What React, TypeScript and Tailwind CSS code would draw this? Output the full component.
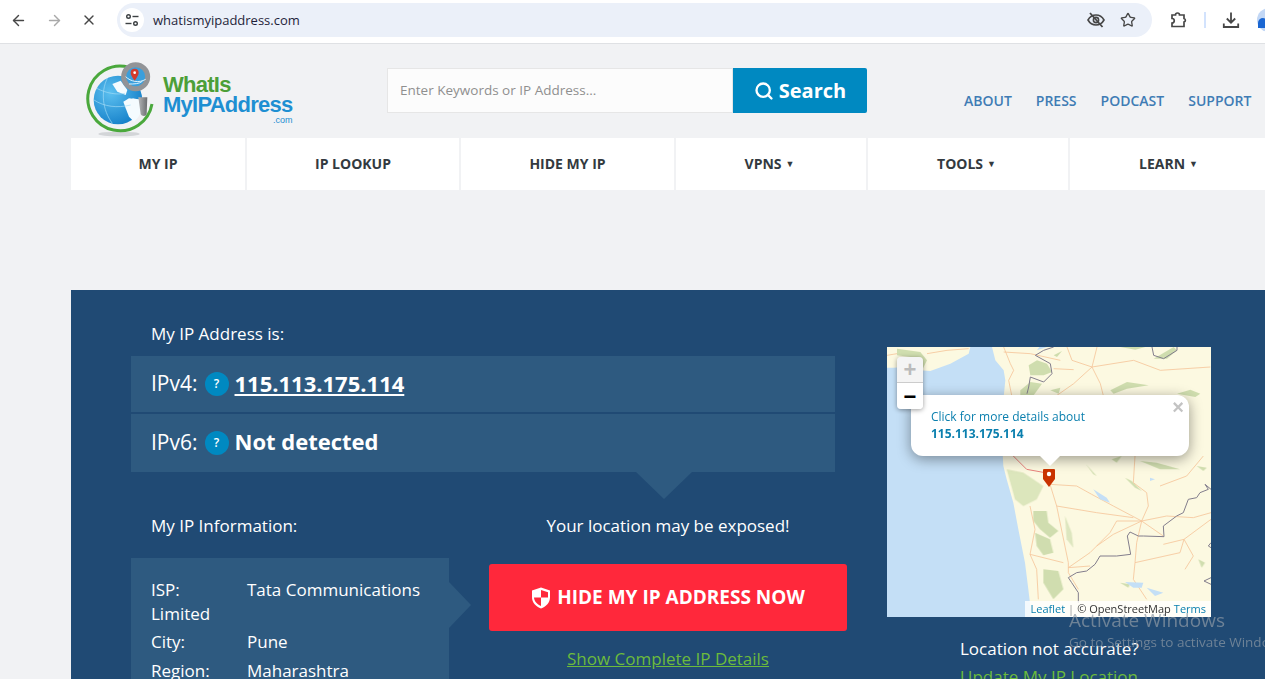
import { ArrowLeft, ArrowRight, X, Star, Search } from "lucide-react";

const navItems = [
  { label: "MY IP", width: "w-[174px]" },
  { label: "IP LOOKUP", width: "w-[212px]" },
  { label: "HIDE MY IP", width: "w-[213px]" },
  { label: "VPNS", width: "w-[190px] pr-[3px]", caret: true },
  { label: "TOOLS", width: "w-[200px] pr-[3px]", caret: true },
  { label: "LEARN", width: "w-[199px] pr-[2px]", caret: true },
];

function BrowserBar() {
  return (
    <div className="flex h-[44px] items-center border-b border-[#dfe1e4] bg-white pb-[3px] text-[#474747]">
      <ArrowLeft size={17} strokeWidth={2} className="ml-[10px] shrink-0" />
      <ArrowRight size={17} strokeWidth={2} className="ml-[19px] shrink-0 text-[#a9a9a9]" />
      <X size={16} strokeWidth={2} className="ml-[18px] shrink-0" />
      <div className="ml-[20px] flex h-[34px] w-[1035px] shrink-0 items-center rounded-full bg-[#ebf0f9] pl-[3px]">
        <div className="flex h-[24px] w-[24px] items-center justify-center rounded-full bg-white">
          <svg width="16" height="16" viewBox="0 0 16 16" fill="none" stroke="#3c4043" strokeWidth="1.4">
            <circle cx="4.5" cy="4.5" r="1.8" />
            <path d="M8.5 4.5h6" />
            <circle cx="11.5" cy="11.5" r="1.8" />
            <path d="M1.5 11.5h6" />
          </svg>
        </div>
        <span className="ml-[9px] pt-[1px] text-[13px] text-[#1f1f3a]">whatismyipaddress.com</span>
        <div className="ml-auto flex items-center gap-[15px] pr-[16px]">
          <svg width="18" height="18" viewBox="0 0 18 18" fill="none" stroke="#474747" strokeWidth="1.6">
            <path d="M1 9c2-3.6 4.800-5 8-5s6 1.400 8 5c-2 3.600-4.800 5-8 5s-6-1.400-8-5z" />
            <circle cx="9" cy="9" r="2.600" />
            <path d="M3 2l12.500 14" strokeWidth="1.800" />
          </svg>
          <Star size={16} strokeWidth={2} />
        </div>
      </div>
      <svg className="ml-[17px] shrink-0" width="18" height="18" viewBox="0 0 18 18" fill="none" stroke="#474747" strokeWidth="1.700">
        <path d="M3 4h3.500a2 2 0 0 1 4 0H15v3.500a1.800 1.800 0 0 1 0 3.500v4.500H3v-3.500a2 2 0 0 0 0-4.500z" />
      </svg>
      <div className="ml-[17px] h-[16px] w-[2px] shrink-0 bg-[#d3e3fd]" />
      <svg className="ml-[16px] shrink-0" width="18" height="18" viewBox="0 0 18 18" fill="none" stroke="#474747" strokeWidth="1.800">
        <path d="M9 1.500v10M4.800 7.500L9 11.700l4.200-4.200M1.800 12.500v3.500h14.400v-3.500" />
      </svg>
      <div className="ml-[17px] h-[24px] w-[24px] shrink-0 rounded-full bg-[#c2d7f5]">
        <div className="ml-[1px] mt-[10px] h-[10px] w-[10px] rounded-t-full bg-[#1a66d2]" />
      </div>
    </div>
  );
}

function Logo() {
  return (
    <div className="flex items-start">
      <svg width="76" height="78" viewBox="0 0 76 78">
        <defs>
          <radialGradient id="globe" cx="0.35" cy="0.35" r="0.8">
            <stop offset="0" stopColor="#5cc0f0" />
            <stop offset="1" stopColor="#0c78c4" />
          </radialGradient>
          <linearGradient id="handle" x1="0" y1="0" x2="1" y2="0">
            <stop offset="0" stopColor="#b4b6b8" />
            <stop offset="1" stopColor="#6b6d70" />
          </linearGradient>
        </defs>
        {/* coordinates below are from a 3x crop of the logo */}
        <g transform="translate(-2 -1) scale(0.3333)">
          <ellipse cx="105" cy="222" rx="62" ry="7" fill="#d3d5d8" />
          <path d="M135 22A97 97 0 1 0 204 132" fill="none" stroke="#4aa83c" strokeWidth="9" />
          <circle cx="102" cy="120" r="73" fill="url(#globe)" />
          <path d="M118 125l17-10 37 5 3 30-25 35-15-15-10-25z" fill="#f4fbfe" />
          <path d="M85 72l25-10 20 28-5 15-25-10z" fill="#f4fbfe" />
          <path d="M150 185A73 73 0 0 0 175 120L145 115 160 160z" fill="#f4fbfe" />
          <path d="M30 120c30 20 70 25 110 15M70 55c-20 40-15 95 15 135M38 85c30 15 60 20 85 15" fill="none" stroke="#a5dcf6" strokeWidth="2" />
          <circle cx="155" cy="50" r="36" fill="#3b9fdc" stroke="#929497" strokeWidth="15" />
          <path d="M125 50c15 15 40 20 60 8M135 72c15 0 30 0 40-8" fill="none" stroke="#dff2fb" strokeWidth="3" />
          <path d="M152 62c-8-12-12-17-12-24a12 12 0 0 1 24 0c0 7-4 12-12 24z" fill="#d43b2c" />
          <circle cx="152" cy="38" r="4" fill="white" />
          <path d="M163 112h27l-2 50c0 8-16 8-18 0z" fill="url(#handle)" />
        </g>
      </svg>
      <div className="ml-[1px] mt-[14px] flex flex-col font-['Liberation_Sans',sans-serif] font-bold">
        <span className="h-[20px] text-[22px] leading-[20px] tracking-[-0.75px] text-[#4c9f38]">WhatIs</span>
        <span className="h-[20px] text-[22px] leading-[20px] tracking-[-0.75px] text-[#1e8fd2]">MyIPAddress</span>
        <span className="self-end text-[9px] font-normal leading-[10px] text-[#1e8fd2]">.com</span>
      </div>
    </div>
  );
}

function Header() {
  return (
    <div className="flex h-[94px] pl-[15px]">
      <div className="mt-[17px] w-[301px]">
        <Logo />
      </div>
      <div className="mt-[24px] flex h-[45px]">
        <div className="flex w-[346px] items-center border border-[#e6e6e6] bg-[#fcfcfc] pl-[12px] text-[13.500px] text-[#8f8f8f]">
          Enter Keywords or IP Address...
        </div>
        <div className="flex w-[134px] items-center justify-center gap-[5px] rounded-r-[2px] bg-[#0089c1] text-[20px] font-bold text-white">
          <Search size={20} strokeWidth={2.800} />
          Search
        </div>
      </div>
      <div className="ml-[97px] mt-[46px] flex gap-[24px] text-[14px] font-semibold text-[#3f7cb4]">
        <span>ABOUT</span>
        <span>PRESS</span>
        <span>PODCAST</span>
        <span>SUPPORT</span>
      </div>
    </div>
  );
}

function Nav() {
  return (
    <div className="flex h-[52px] gap-[2px] overflow-hidden">
      {navItems.map((item) => (
        <div
          key={item.label}
          className={`flex shrink-0 items-center justify-center gap-[4px] bg-white pb-[2px] text-[14px] font-bold text-[#333a40] ${item.width}`}
        >
          {item.label}
          {item.caret && <span className="text-[9px] leading-none">▼</span>}
        </div>
      ))}
    </div>
  );
}

function Help() {
  return (
    <span className="ml-[7px] mr-[6px] flex h-[24px] w-[24px] items-center justify-center rounded-full bg-[#0089c1] text-[12px] font-semibold text-white">
      ?
    </span>
  );
}

function MapArt() {
  return (
    <svg width="324" height="270" viewBox="21 21 972 810">
      <path d="M336 21L346 61L371 91L376 121L371 171L368 340L370 378L380 418L400 488L415 568L435 668L445 748L455 831H993V21z" fill="#fcf9e1" />
      <path d="M21 21H271L266 41L211 71L151 93L110 90L71 81L41 83L21 83z" fill="#fcf9e1" />
      <path d="M471 31L501 21H478z" fill="#c4dff6" />

      {/* north part, offset of the top crop */}
      <g transform="translate(21 21)">
        <g fill="#c8d9a6" opacity="0.85">
          <path d="M30 5L100 15L120 40L105 70L70 30L30 25z" />
          <path d="M425 55L450 40L480 50L495 75L470 85L430 85z" />
          <path d="M400 130L430 105L465 110L440 145L400 145z" />
          <path d="M800 35L860 0L870 10L840 35z" />
          <path d="M700 0H775L745 8z" />
          <path d="M670 130L720 105L785 115L720 125L680 140z" />
          <path d="M870 140L910 128L940 140L925 150z" />
          <path d="M490 130L520 122L515 140z" />
          <path d="M500 25L525 12L510 30z" />
        </g>
        <g fill="none" stroke="#f5c59a" strokeWidth="2.500">
          <path d="M615 60L630 0" />
          <path d="M615 60L640 110L650 150" />
          <path d="M615 60L560 110L510 145" />
          <path d="M615 60L740 40L820 70L970 60" />
          <path d="M540 0L555 40L615 60" />
          <path d="M350 0L370 50L380 70L365 100L375 150" />
          <path d="M350 15L430 20L520 40" />
          <path d="M120 20L180 10L245 5" />
          <path d="M500 65L560 68" />
          <path d="M0 25L30 20" />
        </g>
        <path d="M500 0L470 10L445 25L490 50L495 80L470 105L430 90L425 120L420 140" fill="none" stroke="#827d8c" strokeWidth="3" />
        <path d="M795 0L800 25L830 35L870 10V0" fill="none" stroke="#827d8c" strokeWidth="3" />
      </g>

      {/* south part, offset of the lower crop */}
      <g transform="translate(360 348)">
        <g fill="#c8d9a6" opacity="0.85">
          <path d="M20 40L70 50L130 90L110 130L70 150L45 130z" opacity="0.75" />
          <path d="M100 165L140 165L145 200L175 225L150 245L120 220L100 195z" />
          <path d="M105 230L150 250L160 290L130 298L110 270z" />
          <path d="M130 340L175 345L190 400L160 430L130 380z" />
          <path d="M420 15L470 20L540 40L480 40z" />
          <path d="M375 65L395 75L425 105L405 95z" />
          <path d="M258 25L290 60L280 55z" />
          <path d="M195 180L215 230L220 275L200 250z" opacity="0.7" />
          <path d="M360 380L390 385L385 395z" />
          <path d="M595 310L615 320L605 335z" />
          <path d="M335 10L365 0L350 20z" />
          <path d="M590 30L620 35L610 45z" />
        </g>
        <g fill="none" stroke="#f5c59a" strokeWidth="2.500">
          <path d="M150 85L230 90L275 115L340 150L425 195" />
          <path d="M425 195L445 150L440 110L400 80L405 0" />
          <path d="M425 195L490 240" />
          <path d="M425 195L500 180L580 185L633 170" />
          <path d="M425 195L350 195L330 230L270 290L205 335" />
          <path d="M425 195L340 235L290 270" />
          <path d="M150 85L170 150L205 320L205 350L235 400" />
          <path d="M170 150L290 170L400 185" />
          <path d="M90 150L105 220L90 295L110 340L115 430" />
          <path d="M425 195L410 260L405 320L400 370L440 430" />
          <path d="M405 320L540 290L552 250L490 265" />
          <path d="M552 250L633 190" />
          <path d="M552 250L580 300L555 340" />
          <path d="M205 335L270 330" />
          <path d="M90 295L190 320" />
          <path d="M480 90L560 60L610 0" />
        </g>
        <path d="M40 0L80 40L135 50" fill="none" stroke="#e8817c" strokeWidth="3" />
        <g fill="#c4dff6">
          <path d="M280 100L320 125L330 140L300 130z" />
          <path d="M375 378L430 380L425 395L400 395z" />
          <path d="M440 395L490 410L465 420z" />
          <path d="M450 65L465 70L450 75z" />
        </g>
        <path
          d="M633 100L615 85L625 100L600 110L590 125L565 130L550 170L530 180L490 210L492 242L430 240L415 240L390 228L382 240L392 295L350 300L300 300L285 325L260 345L230 350L205 365L215 380L235 410L235 440"
          fill="none"
          stroke="#827d8c"
          strokeWidth="3"
        />
        <path d="M633 260L625 270L633 275" fill="none" stroke="#827d8c" strokeWidth="3" />
        <path d="M633 365L612 375L633 385" fill="none" stroke="#827d8c" strokeWidth="3" />
      </g>
    </svg>
  );
}

function MapPanel() {
  return (
    <div className="relative h-[270px] w-[324px] overflow-hidden bg-[#c4dff6]">
      <MapArt />

      <div className="absolute left-[24px] top-[48px] h-[61px] w-[278px] rounded-[12px] bg-white pl-[20px] pt-[13px] text-[12px] leading-[17px] text-[#0a7fae] shadow-[0_3px_14px_rgba(0,0,0,0.4)]">
        <div>Click for more details about</div>
        <div className="font-bold">115.113.175.114</div>
        <span className="absolute right-[5px] top-0 font-['Liberation_Sans',sans-serif] text-[20px] font-bold leading-[24px] text-[#c3c3c3]">×</span>
        <div className="absolute left-[128px] top-[60px] h-0 w-0 border-x-[11px] border-t-[11px] border-x-transparent border-t-white" />
      </div>

      <div className="absolute left-[10px] top-[10px] w-[26px] overflow-hidden rounded-[4px] shadow-[0_1px_5px_rgba(0,0,0,0.4)]">
        <div className="flex h-[26px] items-center justify-center border-b border-[#ccc] bg-[#f4f4f4] font-['Liberation_Sans',sans-serif] text-[22px] font-bold text-[#bbb]">
          +
        </div>
        <div className="flex h-[26px] items-center justify-center bg-white font-['Liberation_Sans',sans-serif] text-[22px] font-bold text-black">
          −
        </div>
      </div>

      <svg className="absolute left-[156px] top-[122px]" width="12" height="18" viewBox="0 0 12 18">
        <path d="M1 0h10a1 1 0 0 1 1 1v9l-6 8-6-8V1a1 1 0 0 1 1-1z" fill="#c93300" />
        <circle cx="6" cy="5" r="2.200" fill="white" />
      </svg>

      <div className="absolute bottom-0 right-0 flex h-[16px] items-center gap-[3px] bg-white/80 px-[5px] text-[11px] text-[#333]">
        <span className="text-[#0a7fae]">Leaflet</span>
        <span className="text-[#999]">|</span>
        <span>© OpenStreetMap</span>
        <span className="text-[#0a7fae]">Terms</span>
      </div>
    </div>
  );
}

function Hero() {
  return (
    <div className="mt-[100px] flex bg-[#204a74] pb-[40px] pl-[60px] pt-[31px] text-[17px] text-white">
      <div className="w-[716px] shrink-0">
        <div className="pl-[20px] leading-[26px]">My IP Address is:</div>
        <div className="mt-[9px] flex h-[56px] w-[704px] items-center bg-[#2e5a80] pl-[20px] text-[21px]">
          IPv4:
          <Help />
          <a className="pb-[1px] text-[22px] font-bold underline">115.113.175.114</a>
        </div>
        <div className="mt-[2px] flex h-[58px] w-[704px] items-center bg-[#2e5a80] pl-[20px] text-[21px]">
          IPv6:
          <Help />
          <span className="pb-[3px] text-[22px] font-bold">Not detected</span>
        </div>
        <div className="ml-[505px] h-0 w-0 border-x-[28px] border-t-[27px] border-x-transparent border-t-[#2e5a80]" />

        <div className="flex">
          <div className="w-[318px] shrink-0">
            <div className="mt-[14px] pl-[20px] leading-[26px]">My IP Information:</div>
            <div className="relative mt-[19px] h-[200px] bg-[#2e5a80] pl-[20px] pt-[20px] leading-[24px]">
              <div>
                <span className="inline-block w-[96px]">ISP:</span>Tata Communications Limited
              </div>
              <div className="mt-[4px]">
                <span className="inline-block w-[96px]">City:</span>Pune
              </div>
              <div className="mt-[5px]">
                <span className="inline-block w-[96px]">Region:</span>Maharashtra
              </div>
              <div className="absolute left-full top-[24px] h-0 w-0 border-y-[23px] border-l-[22px] border-y-transparent border-l-[#2e5a80]" />
            </div>
          </div>
          <div className="ml-[40px] flex w-[358px] flex-col items-center">
            <div className="mt-[14px] leading-[26px]">Your location may be exposed!</div>
            <div className="mt-[25px] flex h-[67px] w-[358px] items-center justify-center gap-[6px] rounded-[3px] bg-[#ff283b] text-[19px] font-bold">
              <svg width="20" height="22" viewBox="0 0 20 22">
                <path d="M10 0.500L19 3.500V10c0 6-4 9.500-9 11.500C5 19.500 1 16 1 10V3.500z" fill="white" />
                <path d="M10 3L17 5.300V10.500H10zM10 10.500V19C6 17.300 3.300 14.500 3 10.500z" fill="#ff283b" />
              </svg>
              HIDE MY IP ADDRESS NOW
            </div>
            <a className="mt-[15px] text-[#6cbb3c] underline">Show Complete IP Details</a>
          </div>
        </div>
      </div>
      <div className="ml-[40px] shrink-0">
        <div className="mt-[26px]">
          <MapPanel />
        </div>
        <div className="mt-[19px] pl-[73px] leading-[26px]">Location not accurate?</div>
        <a className="mt-[2px] block pl-[73px] leading-[26px] text-[#6cbb3c] underline">Update My IP Location</a>
      </div>
    </div>
  );
}

export default function App() {
  return (
    <div className="relative h-[679px] w-[1265px] overflow-hidden bg-[#f1f2f4] font-['Open_Sans',sans-serif]">
      <BrowserBar />
      <div className="pl-[71px]">
        <Header />
        <Nav />
        <Hero />
      </div>
      <div className="absolute left-[1069px] top-[607px] whitespace-nowrap text-[#8f9aa5]/70">
        <div className="text-[19px] leading-[26px]">Activate Windows</div>
        <div className="text-[13.500px] leading-[18px]">Go to Settings to activate Windows.</div>
      </div>
    </div>
  );
}
